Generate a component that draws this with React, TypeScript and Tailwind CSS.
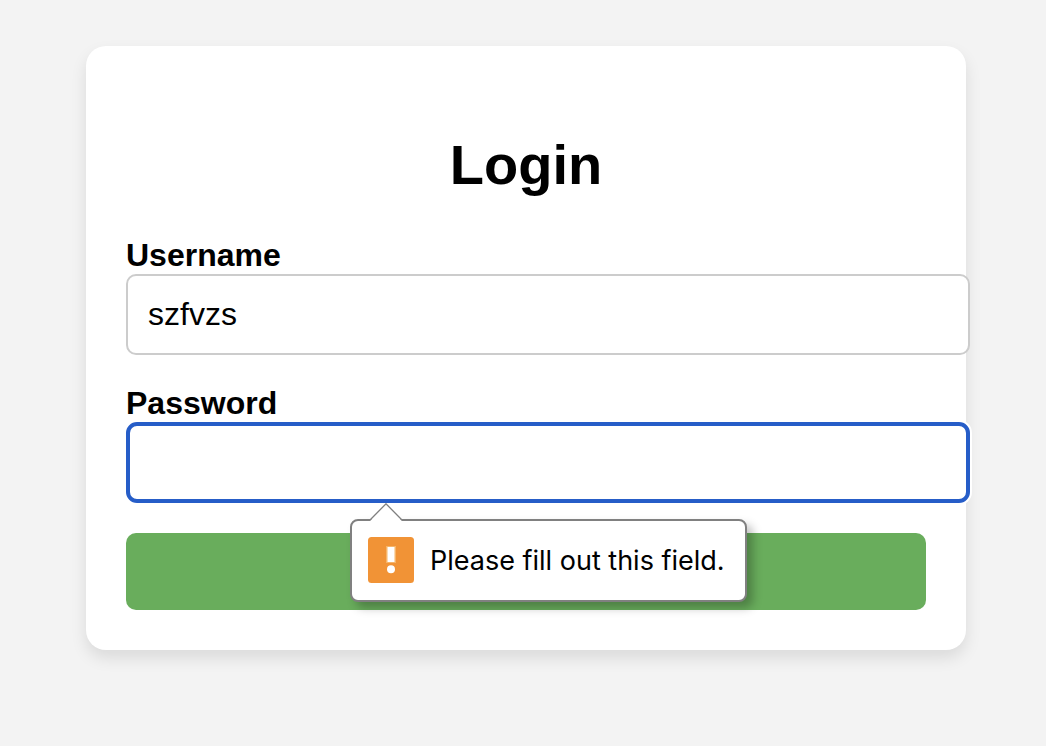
import { useState } from "react";

function ValidationBubble({ message }: { message: string }) {
  return (
    <div
      id="password-error"
      role="alert"
      className="absolute left-[224px] top-[97px] z-10 flex items-center gap-4 whitespace-nowrap rounded-lg border-2 border-[#808080] bg-white pt-4 pr-5 pb-[17px] pl-4 shadow-[6px_6px_10px_rgba(0,0,0,0.26)]"
    >
      <svg
        className="absolute -top-[18px] left-4 h-[19px] w-9"
        viewBox="0 0 36 19"
        aria-hidden="true"
      >
        <path d="M2.5 17.5 18 1.2 33.5 17.5V19h-31z" fill="#fff" />
        <path d="M2 17 18 0.8 34 17" fill="none" stroke="#808080" strokeWidth="1.3" />
      </svg>
      <svg className="h-[46px] w-[46px] shrink-0" viewBox="0 0 46 46" aria-hidden="true">
        <rect width="46" height="46" rx="3.5" fill="#f19336" />
        <rect x="18" y="9" width="10" height="17" fill="#f6b569" />
        <rect x="19.5" y="10" width="7" height="15" fill="#fff" />
        <circle cx="23" cy="32.2" r="4" fill="#fff" />
      </svg>
      <span className="pt-0.5 font-['Inter',sans-serif] text-[27px] leading-8">{message}</span>
    </div>
  );
}

export default function App() {
  const [username, setUsername] = useState("szfvzs");
  const [password, setPassword] = useState("");

  return (
    <main className="min-h-screen bg-[#f3f3f3] pt-[46px] pr-20 pb-10 pl-[86px] font-['Liberation_Sans',Arial,sans-serif] text-black">
      <form
        onSubmit={(event) => event.preventDefault()}
        className="mx-auto max-w-[880px] rounded-[20px] bg-white px-10 pt-[87px] pb-10 shadow-[0_8px_16px_rgba(0,0,0,0.1)]"
      >
        <h1 className="mb-10 text-center text-[56px] leading-[64px] font-bold">Login</h1>

        <div className="mb-[30px]">
          <label htmlFor="username" className="block text-[32px] leading-[37px] font-bold">
            Username
          </label>
          <input
            id="username"
            type="text"
            value={username}
            onChange={(event) => setUsername(event.target.value)}
            className="block box-content h-[37px] w-full rounded-[10px] border-2 border-[#cccccc] bg-white px-5 py-5 text-[32px] leading-[37px] outline-none"
          />
        </div>

        <div className="mb-[30px]">
          <label htmlFor="password" className="block text-[32px] leading-[37px] font-bold">
            Password
          </label>
          <div className="relative">
            <input
              id="password"
              type="password"
              value={password}
              aria-describedby="password-error"
              onChange={(event) => setPassword(event.target.value)}
              className="block box-content h-[37px] w-full rounded-[11px] border-4 border-[#265dc8] bg-white px-[18px] py-[18px] text-[32px] leading-[37px] ring-2 ring-white outline-none"
            />
            {password === "" && <ValidationBubble message="Please fill out this field." />}
          </div>
        </div>

        <button
          type="submit"
          aria-label="Login"
          className="block h-[77px] w-full rounded-[10px] bg-[#69ad5c] text-[32px] leading-[37px] text-white"
        >
          {password !== "" && "Login"}
        </button>
      </form>
    </main>
  );
}
